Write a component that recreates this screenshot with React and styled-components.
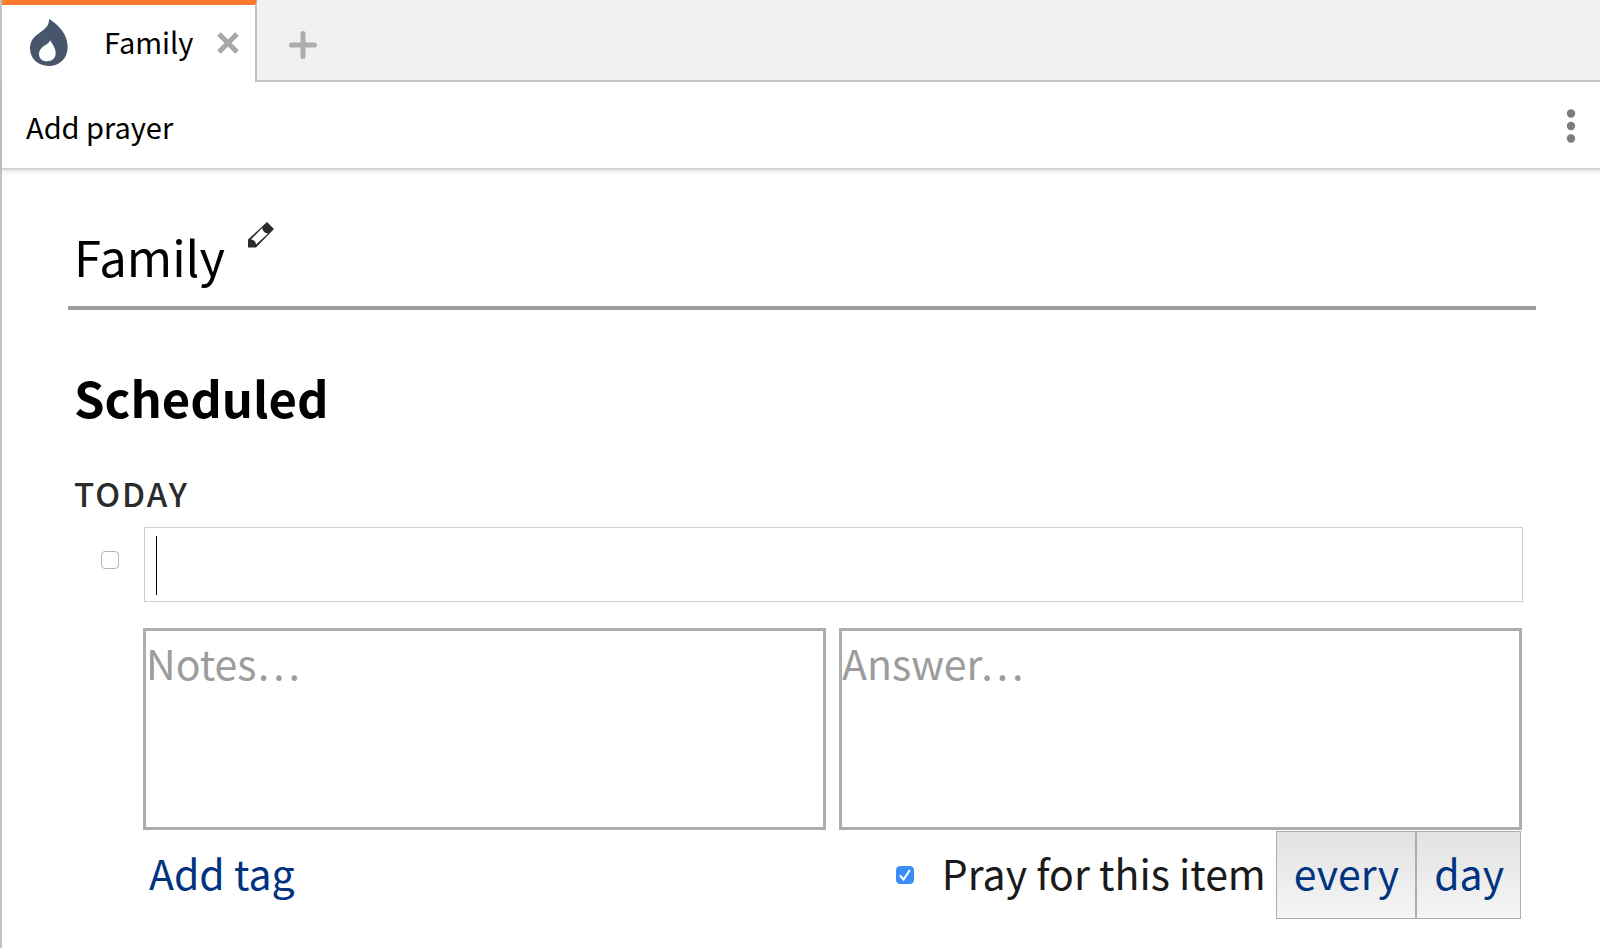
import React from "react";
import styled, { createGlobalStyle, css } from "styled-components";

const GlobalStyle = createGlobalStyle`
  *, *::before, *::after { box-sizing: border-box; }
  body { margin: 0; background: #fff; }
  button, input, textarea { font: inherit; color: inherit; margin: 0; }
`;

const Page = styled.div`
  min-height: 100vh;
  border-left: 2px solid #c2c2c2;
  font-family: "Noto Sans CJK SC", "Noto Sans", sans-serif;
  color: #000;
`;

const TabBar = styled.nav`
  display: flex;
  height: 82px;
  background: #f1f1f1;
`;

const Tab = styled.div`
  display: flex;
  align-items: center;
  padding: 0 16px 2px 28px;
  border-top: 5px solid #ff7a2e;
  border-right: 2px solid #c2c2c2;
  background: #fff;
`;

const TabLabel = styled.span`
  margin: 0 24px 0 36px;
  font-size: 29px;
  line-height: 40px;
  padding-bottom: 4px;
`;

const IconButton = styled.button`
  display: flex;
  padding: 0;
  border: 0;
  background: none;
  cursor: pointer;
`;

const TabStrip = styled.div`
  flex: 1;
  display: flex;
  align-items: center;
  padding: 10px 32px 0;
  border-bottom: 2px solid #c2c2c2;
`;

const Toolbar = styled.header`
  display: flex;
  align-items: center;
  justify-content: space-between;
  height: 88px;
  padding: 1px 24px 0;
  border-bottom: 2px solid #d4d4d4;
  box-shadow: 0 2px 4px rgba(0, 0, 0, 0.1);
`;

const ToolbarButton = styled.button`
  padding: 0;
  border: 0;
  background: none;
  font-size: 29px;
  line-height: 40px;
  cursor: pointer;
`;

const Main = styled.main`
  padding: 52px 64px 28px 66px;
`;

const TitleRow = styled.div`
  display: flex;
  align-items: flex-start;
  gap: 23px;
  padding: 0 6px 18px;
  border-bottom: 4px solid #9e9e9e;
`;

const Title = styled.h1`
  margin: 0;
  padding-top: 2px;
  font-size: 49px;
  font-weight: 400;
  line-height: 64px;
`;

const SectionTitle = styled.h2`
  margin: 55px 6px 44px;
  font-size: 49px;
  font-weight: 700;
  line-height: 64px;
`;

const DayTitle = styled.h3`
  margin: 0 6px 14px;
  font-size: 33px;
  font-weight: 500;
  line-height: 40px;
  letter-spacing: 2px;
  color: #2b2b2b;
`;

const Entry = styled.div`
  display: grid;
  grid-template-columns: 75px 1fr;
`;

const EntryMark = styled.div`
  padding: 24px 0 0 33px;
`;

const EntryBody = styled.div`
  padding-right: 12px;
`;

const CheckWrap = styled.span`
  display: grid;
  width: 18px;
  height: 18px;

  > * { grid-area: 1 / 1; }
  svg { pointer-events: none; }
`;

const Box = styled.input`
  appearance: none;
  width: 18px;
  height: 18px;
  border: 1px solid #b5b5b5;
  border-radius: 4px;
  background: #fff;

  ${(p) =>
    p.checked &&
    css`
      border-color: #3b8cf5;
      background: #3b8cf5;
    `}
`;

const PrayerField = styled.div`
  position: relative;
  padding: 0 1px;
`;

const PrayerInput = styled.input`
  display: block;
  width: 100%;
  height: 75px;
  padding: 0 12px;
  border: 1px solid #d0d0d0;
  font-size: 41px;
  outline: none;
`;

const Caret = styled.span`
  position: absolute;
  left: 13px;
  top: 9px;
  width: 1px;
  height: 59px;
  background: #000;
`;

const Details = styled.div`
  padding-right: 2px;
`;

const NoteGrid = styled.div`
  display: grid;
  grid-template-columns: 1fr 1fr;
  gap: 13px;
  margin-top: 26px;
`;

const NoteArea = styled.textarea`
  display: block;
  width: 100%;
  height: 202px;
  padding: 1px 0 0;
  border: 3px solid #adadad;
  font-size: 41px;
  line-height: 60px;
  resize: none;
  outline: none;

  &::placeholder { color: #9c9c9c; opacity: 1; }
`;

const Footer = styled.div`
  display: flex;
  align-items: flex-start;
  padding: 1px 1px 0 0;
  font-size: 41px;
  line-height: 60px;
`;

const AddTag = styled.a`
  margin-right: auto;
  padding: 11px 6px 0;
  color: #003380;
  text-decoration: none;
`;

const PrayOption = styled.label`
  display: flex;
  align-items: center;
  gap: 28px;
  padding: 11px 10px 0 0;
  color: #1a1a1a;

  ${CheckWrap} { margin-top: 6px; }
`;

const Period = styled.button`
  padding: 10px 16px 16px 17px;
  border: 1px solid #adadad;
  background: linear-gradient(#e2e2e2, #f5f5f5);
  color: #003380;
  line-height: 60px;
  cursor: pointer;
`;

const FlameIcon = () => (
  <svg width="38" height="47" viewBox="0 0 114 141" aria-hidden="true">
    <path
      fill="#47566b"
      fillRule="evenodd"
      d="M57 0C92 22 113 50 113 84C113 119 88 141 56 141C24 141 0 119 0 88C0 67 10 54 29 41C46 29 58 20 57 0ZM60 64C58 77 27 82 27 105C27 118 36 127 51 127C67 127 77 117 77 103C77 88 68 76 60 64Z"
    />
  </svg>
);

const CloseIcon = () => (
  <svg width="22" height="22" viewBox="0 0 22 22" stroke="#a8a8a8" strokeWidth="5" aria-hidden="true">
    <path d="M2 2L20 20M20 2L2 20" />
  </svg>
);

const PlusIcon = () => (
  <svg width="28" height="28" viewBox="0 0 28 28" stroke="#adadad" strokeWidth="5" strokeLinecap="round" aria-hidden="true">
    <path d="M14 2.500V25.500M2.500 14H25.500" />
  </svg>
);

const MoreIcon = () => (
  <svg width="10" height="34" viewBox="0 0 10 34" fill="#7c7c7c" aria-hidden="true">
    <circle cx="5" cy="4.500" r="4.200" />
    <circle cx="5" cy="17" r="4.200" />
    <circle cx="5" cy="29.500" r="4.200" />
  </svg>
);

const PencilIcon = () => (
  <svg width="26" height="26" viewBox="0 0 26 26" aria-hidden="true">
    <path fill="#2b2b2b" fillRule="evenodd" d="M19 0L26 7L8 25.500H0V17.500ZM14.200 6L3 17.500Q7.500 18 8 22.500L20 11.500Q15 11 14.200 6Z" />
  </svg>
);

const CheckMark = () => (
  <svg width="18" height="18" viewBox="0 0 18 18" fill="none" stroke="#fff" strokeWidth="2" aria-hidden="true">
    <path d="M4.500 10L7.500 13.500L13.500 4.500" strokeLinecap="round" />
  </svg>
);

function Checkbox({ checked, ...rest }) {
  return (
    <CheckWrap>
      <Box type="checkbox" checked={checked} readOnly {...rest} />
      {checked && <CheckMark />}
    </CheckWrap>
  );
}

export default function App() {
  return (
    <Page>
      <GlobalStyle />
      <TabBar>
        <Tab>
          <FlameIcon />
          <TabLabel>Family</TabLabel>
          <IconButton aria-label="Close tab">
            <CloseIcon />
          </IconButton>
        </Tab>
        <TabStrip>
          <IconButton aria-label="New tab">
            <PlusIcon />
          </IconButton>
        </TabStrip>
      </TabBar>
      <Toolbar>
        <ToolbarButton>Add prayer</ToolbarButton>
        <IconButton aria-label="More options">
          <MoreIcon />
        </IconButton>
      </Toolbar>
      <Main>
        <TitleRow>
          <Title>Family</Title>
          <IconButton aria-label="Rename list">
            <PencilIcon />
          </IconButton>
        </TitleRow>
        <SectionTitle>Scheduled</SectionTitle>
        <DayTitle>TODAY</DayTitle>
        <Entry>
          <EntryMark>
            <Checkbox checked={false} aria-label="Prayed today" />
          </EntryMark>
          <EntryBody>
            <PrayerField>
              <PrayerInput type="text" aria-label="Prayer" />
              <Caret />
            </PrayerField>
            <Details>
              <NoteGrid>
                <NoteArea placeholder="Notes…" aria-label="Notes" />
                <NoteArea placeholder="Answer…" aria-label="Answer" />
              </NoteGrid>
              <Footer>
                <AddTag href="#tags">Add tag</AddTag>
                <PrayOption>
                  <Checkbox checked />
                  Pray for this item
                </PrayOption>
                <Period>every</Period>
                <Period>day</Period>
              </Footer>
            </Details>
          </EntryBody>
        </Entry>
      </Main>
    </Page>
  );
}
